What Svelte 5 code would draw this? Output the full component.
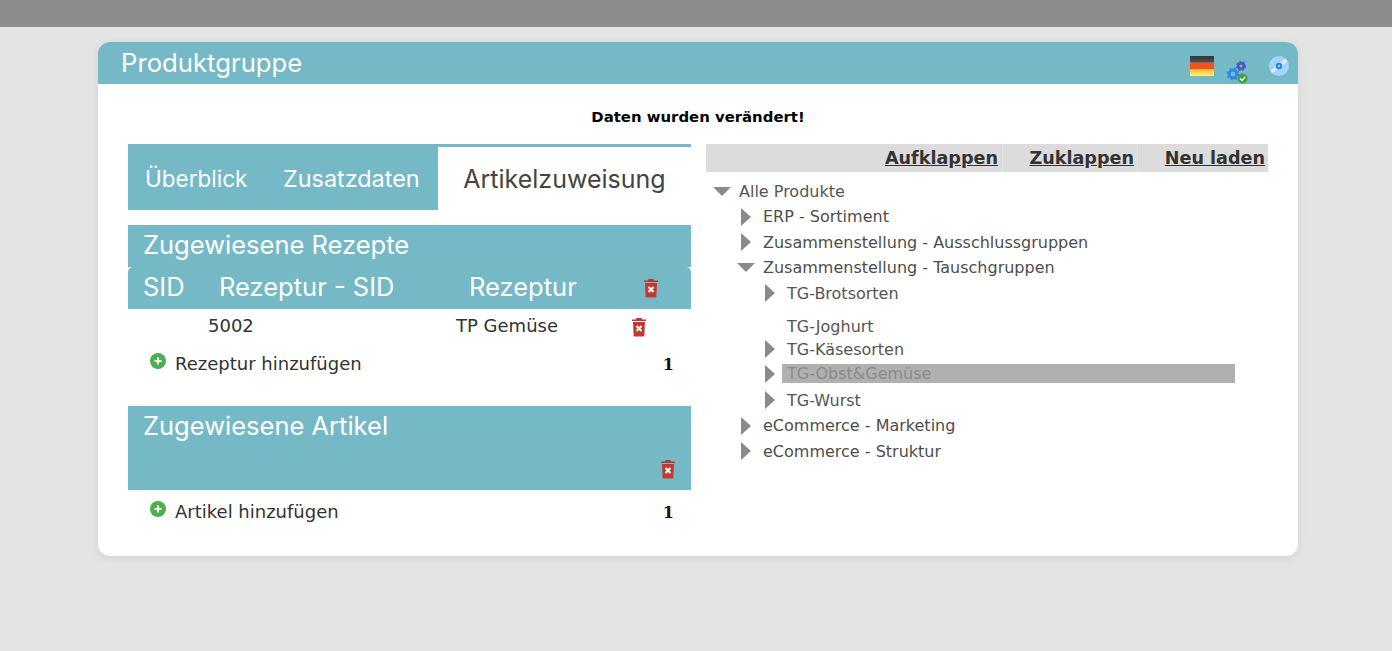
<script>
  const tree = [
    { label: 'Alle Produkte', level: 0, open: true, h: 26 },
    { label: 'ERP - Sortiment', level: 1, h: 25 },
    { label: 'Zusammenstellung - Ausschlussgruppen', level: 1, h: 26 },
    { label: 'Zusammenstellung - Tauschgruppen', level: 1, open: true, h: 25 },
    { label: 'TG-Brotsorten', level: 2, h: 26, gap: 9 },
    { label: 'TG-Joghurt', level: 2, leaf: true, h: 22 },
    { label: 'TG-Käsesorten', level: 2, h: 24 },
    { label: 'TG-Obst&Gemüse', level: 2, selected: true, h: 26 },
    { label: 'TG-Wurst', level: 2, h: 26 },
    { label: 'eCommerce - Marketing', level: 1, h: 25 },
    { label: 'eCommerce - Struktur', level: 1, h: 26 }
  ];
</script>

{#snippet trash()}
  <svg class="trash" viewBox="0 0 16 20" width="16" height="20">
    <path d="M5.500 1h5l.5 1.500h4v1.500H1V2.500h4z" fill="#b5392e" />
    <path d="M2 5h12l-.6 13.200q-.1 1.300-1.300 1.300H3.900q-1.200 0-1.300-1.300z" fill="#c4392f" />
    <path d="M5.500 9l5 5M10.500 9l-5 5" stroke="#fff" stroke-width="2" />
  </svg>
{/snippet}

{#snippet plus()}
  <svg class="plus" viewBox="0 0 16 16" width="16" height="16">
    <circle cx="8" cy="8" r="8" fill="#4caf50" />
    <path d="M4.500 8h7M8 4.500v7" stroke="#fff" stroke-width="2" />
  </svg>
{/snippet}

<div class="topbar"></div>

<main class="card">
  <header class="card-head">
    <h1>Produktgruppe</h1>
    <div class="head-icons">
      <svg class="flag" viewBox="0 0 24 20" width="24" height="20">
        <defs>
          <linearGradient id="fb" x1="0" y1="0" x2="0" y2="1">
            <stop offset="0" stop-color="#333" /><stop offset="1" stop-color="#555" />
          </linearGradient>
          <linearGradient id="fy" x1="0" y1="0" x2="0" y2="1">
            <stop offset="0" stop-color="#fbc02d" /><stop offset="1" stop-color="#fff176" />
          </linearGradient>
        </defs>
        <rect width="24" height="6.700" fill="url(#fb)" />
        <rect y="6.700" width="24" height="6.600" fill="#f4511e" />
        <rect y="13.300" width="24" height="6.700" fill="url(#fy)" />
      </svg>
      <svg class="gears" viewBox="0 0 24 24" width="24" height="24">
        <circle cx="7" cy="14" r="3.800" fill="none" stroke="#2a8ae8" stroke-width="2.800" />
        <circle cx="7" cy="14" r="5.700" fill="none" stroke="#2a8ae8" stroke-width="1.600" stroke-dasharray="2 2.500" />
        <circle cx="15" cy="6" r="2.800" fill="none" stroke="#4a55c0" stroke-width="2.400" />
        <circle cx="15" cy="6" r="4.400" fill="none" stroke="#4a55c0" stroke-width="1.300" stroke-dasharray="2 1.700" />
        <circle cx="16.500" cy="18.500" r="5" fill="#43a047" />
        <path d="M14 18.500l2 2 3-3.500" fill="none" stroke="#fff" stroke-width="1.400" />
      </svg>
      <svg class="disc" viewBox="0 0 20 20" width="20" height="20">
        <circle cx="10" cy="10" r="10" fill="#a5d4fb" />
        <path d="M2.500 16L17.500 4" stroke="#e0f1fd" stroke-width="3" />
        <circle cx="10" cy="10" r="3.200" fill="#1e88e5" />
        <circle cx="10" cy="10" r="1.200" fill="#a5d4fb" />
      </svg>
    </div>
  </header>

  <p class="notice">Daten wurden verändert!</p>

  <div class="columns">
    <section class="left">
      <nav class="tabs">
        <a class="tab first">Überblick</a>
        <a class="tab second">Zusatzdaten</a>
        <a class="tab active">Artikelzuweisung</a>
      </nav>

      <h2 class="block-title">Zugewiesene Rezepte</h2>
      <div class="thead">
        <span class="th-sid">SID</span>
        <span class="th-rsid">Rezeptur - SID</span>
        <span class="th-rez">Rezeptur</span>
        <span class="th-del">{@render trash()}</span>
      </div>
      <div class="trow">
        <span class="td-rsid">5002</span>
        <span class="td-rez">TP Gemüse</span>
        <span class="td-del">{@render trash()}</span>
      </div>
      <div class="add-row first-add">
        {@render plus()}
        <span class="add-label">Rezeptur hinzufügen</span>
        <b class="count">1</b>
      </div>

      <div class="artikel-head">
        <h2>Zugewiesene Artikel</h2>
        <div class="artikel-del">{@render trash()}</div>
      </div>
      <div class="add-row second-add">
        {@render plus()}
        <span class="add-label">Artikel hinzufügen</span>
        <b class="count">1</b>
      </div>
    </section>

    <section class="right">
      <div class="toolbar">
        <a class="tool tool-a">Aufklappen</a>
        <a class="tool tool-b">Zuklappen</a>
        <a class="tool tool-c">Neu laden</a>
      </div>
      <ul class="tree">
        {#each tree as node}
          <li class="node level{node.level}" style="height: {node.h}px; margin-bottom: {node.gap || 0}px">
            {#if node.leaf}
              <span class="arrow"></span>
            {:else if node.open}
              <span class="arrow"><i class="down"></i></span>
            {:else}
              <span class="arrow"><i class="side"></i></span>
            {/if}
            <span class="label" class:selected={node.selected}>{node.label}</span>
          </li>
        {/each}
      </ul>
    </section>
  </div>
</main>

<style>
  :global(body) {
    background: #e4e4e4;
    font-family: "DejaVu Sans", Verdana, sans-serif;
    height: 651px;
    overflow: hidden;
  }

  .topbar {
    height: 27px;
    background: #8c8c8c;
  }

  .card {
    width: 1200px;
    height: 514px;
    margin: 15px 0 0 98px;
    background: #fff;
    border-radius: 12px;
    box-shadow: 0 2px 10px rgba(0, 0, 0, 0.08);
    overflow: hidden;
  }

  .card-head {
    height: 42px;
    background: #75b9c7;
    display: flex;
    justify-content: space-between;
    padding-left: 23px;
  }

  h1 {
    margin: 0;
    font: 400 25.7px/41px Inter, "Noto Sans", sans-serif;
    color: #fff;
  }

  .head-icons {
    display: flex;
    align-items: flex-start;
    padding-top: 14px;
    padding-right: 9px;
  }

  .flag { margin-right: 13px; }
  .gears { margin-top: 4px; margin-right: 19px; margin-left: -1px; }

  .notice {
    margin: 0;
    padding-top: 25px;
    height: 35px;
    text-align: center;
    font-size: 14.9px;
    line-height: 17px;
    font-weight: 700;
    color: #000;
  }

  .columns {
    display: flex;
    padding: 0 30px;
    gap: 15px;
  }

  .left { width: 563px; }
  .right { width: 562px; }

  .tabs {
    display: flex;
    height: 63px;
    background: #75b9c7;
    border-top: 3px solid #75b9c7;
    font-family: Inter, "Noto Sans", sans-serif;
    color: #fff;
  }

  .tab {
    font-size: 22.5px;
    line-height: 64px;
  }

  .first { margin-left: 17px; width: 138px; }
  .second { width: 155px; font-size: 23.4px; }

  .active {
    width: 253px;
    background: #fff;
    color: #444;
    font-size: 25px;
    line-height: 64px;
    text-align: center;
  }

  .block-title,
  .artikel-head h2 {
    margin: 0;
    font: 400 25.5px/40px Inter, "Noto Sans", sans-serif;
    color: #fff;
  }

  .block-title {
    margin-top: 15px;
    height: 42px;
    padding-left: 15px;
    background: #75b9c7;
  }

  .thead {
    height: 42px;
    display: flex;
    align-items: center;
    background: #75b9c7;
    border-radius: 5px 5px 0 0;
    font: 400 25.5px/40px Inter, "Noto Sans", sans-serif;
    color: #fff;
  }

  .th-sid { margin-left: 15px; width: 76px; padding-bottom: 2px; }
  .th-rsid { width: 250px; padding-bottom: 2px; }
  .th-rez { width: 174px; padding-bottom: 2px; }
  .th-del { display: flex; }

  .trow {
    height: 36px;
    display: flex;
    align-items: center;
    font-size: 18px;
    line-height: 22px;
    color: #333;
  }

  .td-rsid { margin-left: 80px; width: 248px; padding-bottom: 2px; }
  .td-rez { width: 175px; padding-bottom: 2px; }
  .td-del { display: flex; }

  .add-row {
    display: flex;
    align-items: center;
    padding-left: 22px;
    font-size: 18px;
    color: #333;
  }

  .first-add { height: 38px; margin-bottom: 23px; }
  .second-add { height: 42px; }

  .first-add .add-label { padding-bottom: 1px; }

  .plus { margin-right: 9px; margin-top: -6px; }
  .second-add .plus { margin-top: -4px; }

  .add-label { flex: 1; }

  .count {
    font-family: "DejaVu Serif", serif;
    font-size: 16px;
    color: #111;
    margin-right: 17px;
  }

  .second-add .count { margin-top: 2px; }

  .artikel-head {
    height: 84px;
    background: #75b9c7;
    padding-left: 15px;
  }

  .artikel-del {
    display: flex;
    justify-content: flex-end;
    margin-top: 13px;
    padding-right: 15px;
  }

  .toolbar {
    height: 28px;
    display: flex;
    background: #dcdcdc;
    font-size: 17.6px;
    line-height: 28px;
    font-weight: 700;
    color: #333;
    text-align: right;
  }

  .tool { text-decoration: underline; box-sizing: border-box; }
  .tool-a { width: 297px; border-right: 1px solid #e4e4e4; padding-right: 4px; }
  .tool-b { width: 135px; border-right: 1px solid #e4e4e4; padding-right: 3px; }
  .tool-c { width: 130px; padding-right: 3px; }

  .tree {
    list-style: none;
    margin: 6px 0 0;
    padding: 0;
    font-size: 16px;
    color: #555;
  }

  .node {
    display: flex;
    align-items: center;
  }

  .level0 { padding-left: 7px; }
  .level1 { padding-left: 31px; }
  .level2 { padding-left: 55px; }

  .level1 .label { color: #4d4d4d; }

  .arrow {
    width: 26px;
    flex: none;
    display: block;
  }

  .down,
  .side {
    display: block;
    width: 0;
    height: 0;
  }

  .down {
    border-left: 9px solid transparent;
    border-right: 9px solid transparent;
    border-top: 9px solid #8a8a8a;
  }

  .side {
    margin-left: 4px;
    border-top: 9px solid transparent;
    border-bottom: 9px solid transparent;
    border-left: 10px solid #8a8a8a;
  }

  .label {
    white-space: nowrap;
  }

  .selected {
    background: #b0b0b0;
    color: #8a8a8a;
    width: 448px;
    margin-left: -5px;
    margin-top: -1px;
    padding-left: 5px;
    line-height: 19px;
    flex: none;
  }
</style>
